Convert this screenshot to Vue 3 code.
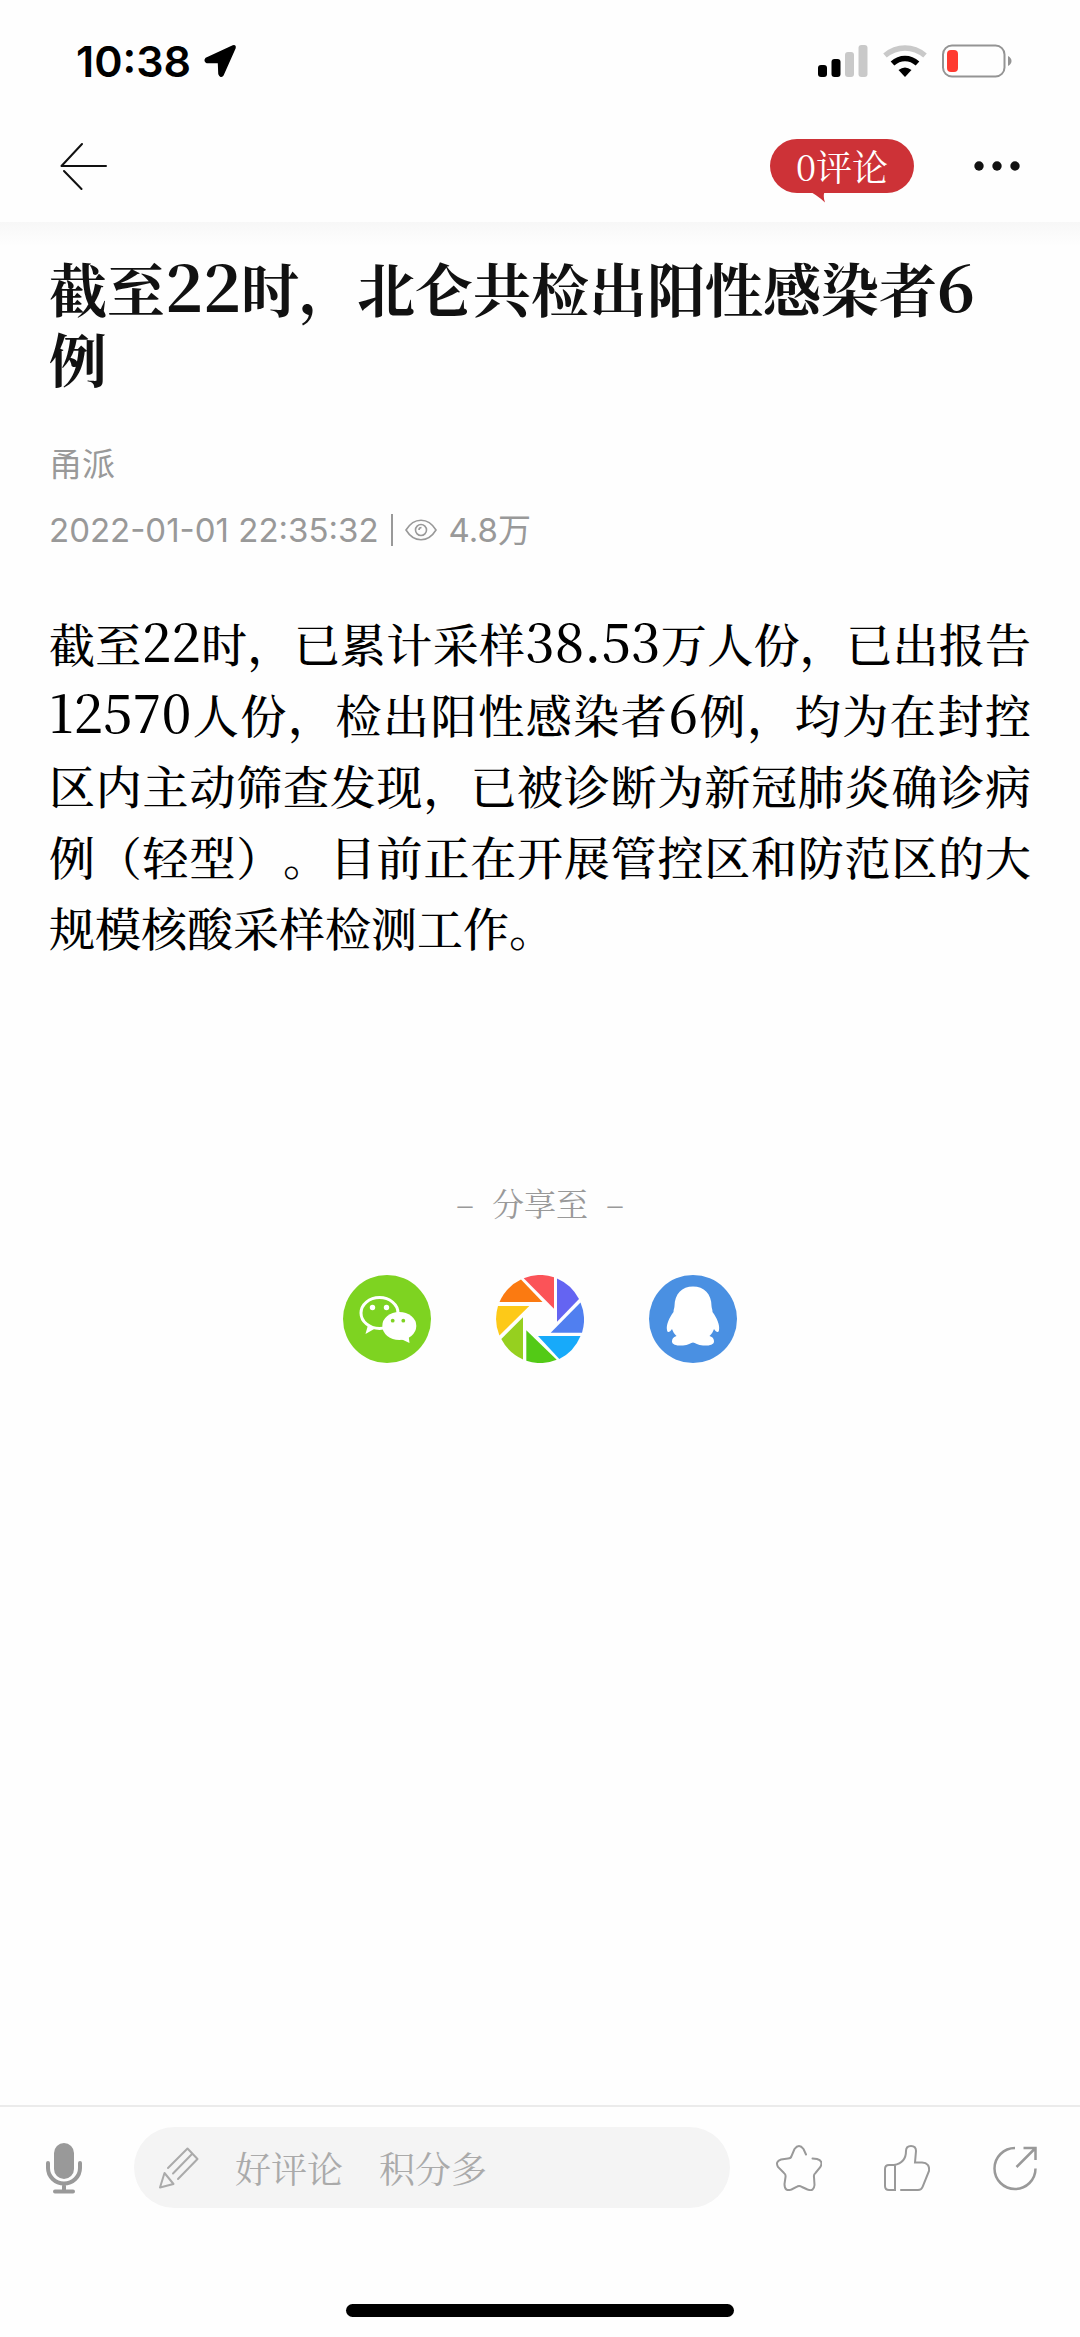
<script setup>
import { ref } from 'vue'

const commentCount = ref(0)
const comment = ref('')

const article = {
    title: '截至22时，北仑共检出阳性感染者6例',
    source: '甬派',
    publishedAt: '2022-01-01 22:35:32',
    views: '4.8万',
    body: '截至22时，已累计采样38.53万人份，已出报告12570人份，检出阳性感染者6例，均为在封控区内主动筛查发现，已被诊断为新冠肺炎确诊病例（轻型）。目前正在开展管控区和防范区的大规模核酸采样检测工作。'
}

// digits are set a little larger than the hanzi around them
function splitDigits(text) {
    return text.split(/([\d.]+)/).filter(Boolean).map(part => ({
        text: part,
        isNumber: /^\d/.test(part)
    }))
}

const titleParts = splitDigits(article.title)
const bodyParts = splitDigits(article.body)
</script>

<template>
    <div class="page">
        <header class="top">
            <div class="status-bar">
                <div class="status-left">
                    <span class="clock">10:38</span>
                    <svg class="location" width="34" height="34" viewBox="0 0 34 34">
                        <path d="M30 2 3 14.500 Q1 17 4 18.500 L15.500 18.500 16 30 Q17.500 34 20 31 L32 4 Q32.500 1 30 2Z" fill="#000" stroke="#000" stroke-width="1.500" stroke-linejoin="round" />
                    </svg>
                </div>
                <div class="status-right">
                    <svg width="50" height="32" viewBox="0 0 50 32">
                        <rect x="0" y="20" width="9" height="12" rx="3" fill="#000" />
                        <rect x="13.500" y="14" width="9" height="18" rx="3" fill="#000" />
                        <rect x="27" y="7" width="9" height="25" rx="3" fill="#c9c9c9" />
                        <rect x="40.500" y="0" width="9" height="32" rx="3" fill="#c9c9c9" />
                    </svg>
                    <svg width="44" height="32" viewBox="0 0 44 32">
                        <path d="M2 10.500 C14 0.500 30 0.500 42 10.500" fill="none" stroke="#c9c9c9" stroke-width="5.500" />
                        <path d="M9.500 18.500 C17 11.800 27 11.800 34.500 18.500" fill="none" stroke="#000" stroke-width="5.500" />
                        <path d="M15.500 25 Q22 20 28.500 25 L22 32Z" fill="#000" />
                    </svg>
                    <svg width="70" height="34" viewBox="0 0 70 34">
                        <rect x="1" y="1.500" width="61.500" height="31" rx="9" fill="none" stroke="#949494" stroke-width="2" />
                        <rect x="5" y="6" width="11" height="22" rx="4" fill="#ff3a30" />
                        <path d="M66 12 Q69.500 14 69.500 17 T66 22Z" fill="#949494" />
                    </svg>
                </div>
            </div>
            <nav class="nav-bar">
                <button class="icon-btn" type="button" aria-label="返回">
                    <svg width="48" height="48" viewBox="0 0 48 48" fill="none" stroke="#111" stroke-width="2" stroke-linecap="round" stroke-linejoin="round">
                        <path d="M22 2 1.500 24 H46 M4 29 21.500 47" />
                    </svg>
                </button>
                <div class="nav-right">
                    <button class="comment-badge" type="button">
                        {{ commentCount }}评论
                        <svg class="badge-tail" width="18" height="12" viewBox="0 0 18 12">
                            <path d="M0 0 Q8 3 17 11.500 Q14.500 5 17 0Z" fill="#cd3237" />
                        </svg>
                    </button>
                    <button class="icon-btn" type="button" aria-label="更多">
                        <svg width="46" height="10" viewBox="0 0 46 10" fill="#111">
                            <circle cx="5" cy="5" r="4.700" />
                            <circle cx="23" cy="5" r="4.700" />
                            <circle cx="41" cy="5" r="4.700" />
                        </svg>
                    </button>
                </div>
            </nav>
        </header>

        <main class="content">
            <h1 class="title"><span v-for="(part, i) in titleParts" :key="i" :class="{ number: part.isNumber }">{{ part.text }}</span></h1>
            <div class="source">{{ article.source }}</div>
            <div class="meta">
                <time>{{ article.publishedAt }}</time>
                <span class="divider"></span>
                <svg width="32" height="22" viewBox="0 0 32 22" fill="none" stroke="#999" stroke-width="1.600">
                    <path d="M1 11 C9 -2 23 -2 31 11 C23 24 9 24 1 11Z" />
                    <circle cx="16" cy="11" r="5.500" />
                    <path d="M14 11 a2.500 2.500 0 0 1 2.500 -2.500" />
                </svg>
                <span>{{ article.views }}</span>
            </div>
            <p class="body"><span v-for="(part, i) in bodyParts" :key="i" :class="{ number: part.isNumber }">{{ part.text }}</span></p>

            <section class="share">
                <h2 class="share-title"><span>–</span><span>分享至</span><span>–</span></h2>
                <div class="share-list">
                    <button class="icon-btn" type="button" aria-label="微信">
                        <svg width="88" height="88" viewBox="0 0 88 88">
                            <circle cx="44" cy="44" r="44" fill="#7ed321" />
                            <ellipse cx="36.500" cy="38" rx="18.500" ry="15.500" fill="none" stroke="#fff" stroke-width="3" />
                            <path d="M25 50 22.500 59 32 53.500Z" fill="#fff" />
                            <circle cx="29.500" cy="32.500" r="2.700" fill="#fff" />
                            <circle cx="43.500" cy="32.500" r="2.700" fill="#fff" />
                            <ellipse cx="56.300" cy="51" rx="17" ry="14" fill="#fff" />
                            <path d="M58 64 66.500 68 65.500 60Z" fill="#fff" />
                            <circle cx="49.700" cy="45.700" r="1.900" fill="#7ed321" />
                            <circle cx="60.300" cy="45.700" r="1.900" fill="#7ed321" />
                        </svg>
                    </button>
                    <button class="icon-btn" type="button" aria-label="朋友圈">
                        <svg width="88" height="88" viewBox="0 0 88 88">
                            <path d="M27.700 3.300 A44 44 0 0 1 58 2.200 V33.700Z" fill="#fb5358" />
                            <path d="M61 3.400 A44 44 0 0 1 83 24 L61 46.700Z" fill="#6464f2" />
                            <path d="M84.500 27.500 A44 44 0 0 1 86 57.700 H54.700Z" fill="#507ff0" />
                            <path d="M84.500 61 A44 44 0 0 1 63.300 84 L42 61Z" fill="#17aafa" />
                            <path d="M60.700 84.700 A44 44 0 0 1 30.300 85.800 V55.300Z" fill="#53ca16" />
                            <path d="M27 84.500 A44 44 0 0 1 5.300 64 L27 42.300Z" fill="#96d01f" />
                            <path d="M3.400 60.500 A44 44 0 0 1 2 31 H33.300Z" fill="#fdc918" />
                            <path d="M3.500 27 A44 44 0 0 1 25 4.600 L46.500 27Z" fill="#fb7a11" />
                        </svg>
                    </button>
                    <button class="icon-btn" type="button" aria-label="QQ">
                        <svg width="88" height="88" viewBox="0 0 88 88">
                            <circle cx="44" cy="44" r="44" fill="#4a90e2" />
                            <path d="M44 11.500 C33 11.500 25.500 19 25.500 31 C25.500 33 24.500 34 24.500 37 C20 43 17 50 18 55 C18.500 58.500 21 57 23 54 C24 57 25.500 59 27.500 61 C24 62 23 64 23 66.500 C23 70 29 71 34 70.500 C39 70 42 68 44 67.500 C46 68 49 70 54 70.500 C59 71 65 70 65 66.500 C65 64 64 62 60.500 61 C62.500 59 64 57 65 54 C67 57 69.500 58.500 70 55 C71 50 68 43 63.500 37 C63.500 34 62.500 33 62.500 31 C62.500 19 55 11.500 44 11.500Z" fill="#fff" />
                        </svg>
                    </button>
                </div>
            </section>
        </main>

        <footer class="bottom">
            <div class="toolbar">
                <button class="icon-btn" type="button" aria-label="语音">
                    <svg width="36" height="52" viewBox="0 0 36 52" fill="none" stroke="#999" stroke-linecap="round">
                        <rect x="8" y="1" width="20" height="36" rx="10" fill="#999" stroke="none" />
                        <path d="M2 21 V26 A16 15.500 0 0 0 34 26 V21 M18 42 V49 M9 49.500 H27" stroke-width="4" />
                    </svg>
                </button>
                <label class="comment-box">
                    <svg width="42" height="42" viewBox="0 0 42 42" fill="none" stroke="#aaa" stroke-width="2" stroke-linecap="round" stroke-linejoin="round">
                        <path d="M10 21 29.500 1.500 39.500 12 20 32 M15 26.500 34 7 M6.500 26 15.500 37 2 40.500Z" />
                    </svg>
                    <input v-model="comment" type="text" placeholder="好评论　积分多" aria-label="评论">
                </label>
                <div class="actions">
                    <button class="icon-btn" type="button" aria-label="收藏">
                        <svg width="46" height="46" viewBox="0 0 46 46" fill="none" stroke="#999" stroke-width="2" stroke-linecap="round">
                            <path d="M30 9.500 L27.500 4 Q23 -2 18.500 4 L15.500 11 Q15 13.500 12 13.500 L5 14.500 Q-1 16.500 2 22 L8 28 Q10 29.500 9.500 32 L8.500 39 Q8.500 47 15.500 44.500 L20.500 42 Q23 40 26 42 L31.500 44.500 Q38 47 38.500 40 L38 32 Q37.500 29.500 39.500 28 L44 22.500 Q48 16 41 14 L36.500 13.500" />
                        </svg>
                    </button>
                    <button class="icon-btn" type="button" aria-label="点赞">
                        <svg width="46" height="46" viewBox="0 0 46 46" fill="none" stroke="#999" stroke-width="2" stroke-linecap="round">
                            <path d="M11 20 V45 H5 Q1 45 1 41 V24 Q1 20 5 20 H10 Q22 18 22 6 Q22 1 27 1 T32 6 L31 17.500 H38 Q46 18 45 26 L38.500 42 Q37.500 45 34 45 H17" />
                        </svg>
                    </button>
                    <button class="icon-btn" type="button" aria-label="分享">
                        <svg width="46" height="46" viewBox="0 0 46 46" fill="none" stroke="#999" stroke-width="2.500">
                            <path d="M23 3 A20.500 20.500 0 1 0 43.500 23.500 M31.500 3 H43.500 V15 M43 3.500 24.500 22" />
                        </svg>
                    </button>
                </div>
            </div>
            <div class="home-indicator"></div>
        </footer>
    </div>
</template>

<style>
body {
    margin: 0;
    background: #fefefe;
}
</style>

<style scoped>
.page {
    display: flex;
    flex-direction: column;
    min-height: 100vh;
    color: #000;
    font-family: "Noto Serif CJK SC", "Noto Sans CJK SC", serif;
}

.icon-btn {
    display: flex;
    padding: 0;
    border: none;
    background: none;
}

.top {
    padding-bottom: 24px;
    background: linear-gradient(#f7f7f7, #fefefe) bottom / 100% 24px no-repeat;
}

.status-bar {
    display: flex;
    justify-content: space-between;
    align-items: center;
    height: 48px;
    padding: 37px 68px 0 76px;
}

.status-left,
.status-right {
    display: flex;
    align-items: center;
    gap: 15px;
}

.status-left {
    gap: 12px;
}

.clock {
    font-family: Inter, sans-serif;
    font-size: 43px;
    font-weight: 600;
    line-height: 48px;
}

.nav-bar {
    display: flex;
    justify-content: space-between;
    align-items: center;
    height: 137px;
    padding: 25px 60px 0;
    box-sizing: border-box;
}

.nav-right {
    display: flex;
    align-items: center;
    gap: 60px;
}

.comment-badge {
    position: relative;
    min-width: 144px;
    height: 54px;
    padding: 0;
    border: none;
    border-radius: 27px;
    background: #cd3237;
    color: #fff;
    font-family: inherit;
    font-size: 36px;
    line-height: 54px;
}

.badge-tail {
    position: absolute;
    top: 52px;
    left: 38px;
}

.content {
    flex: 1;
    padding: 6px 49px 0;
}

.title {
    margin: 0;
    padding-right: 24px;
    color: #111;
    font-size: 58px;
    font-weight: 700;
    line-height: 70px;
}

.title .number {
    font-size: 64px;
    line-height: 1;
}

.source,
.meta {
    color: #999;
    font-family: Inter, "Noto Sans CJK SC", sans-serif;
    font-size: 33px;
    font-weight: 400;
    line-height: 40px;
}

.source {
    margin-top: 52px;
}

.meta {
    display: flex;
    align-items: center;
    gap: 12px;
    margin-top: 26px;
}

.divider {
    width: 2px;
    height: 32px;
    background: #999;
}

.body {
    margin: 57px 0 0;
    font-size: 46px;
    font-weight: 500;
    line-height: 71px;
    text-align: justify;
    text-spacing-trim: space-all;
}

.body .number {
    font-size: 52px;
    line-height: 1;
}

.share {
    margin-top: 216px;
}

.share-title {
    display: flex;
    justify-content: center;
    gap: 18px;
    margin: 0;
    color: #999;
    font-size: 32px;
    font-weight: 400;
    line-height: 48px;
}

.share-list {
    display: flex;
    justify-content: center;
    gap: 65px;
    margin-top: 49px;
}

.bottom {
    border-top: 2px solid #ebebeb;
}

.toolbar {
    display: flex;
    align-items: center;
    padding: 20px 42px 0 46px;
}

.comment-box {
    display: flex;
    flex: 1;
    align-items: center;
    gap: 35px;
    height: 81px;
    margin-left: 52px;
    padding: 0 24px;
    border-radius: 41px;
    background: #f4f4f4;
}

.comment-box input {
    flex: 1;
    min-width: 0;
    padding: 0;
    border: none;
    outline: none;
    background: none;
    font-family: inherit;
    font-size: 36px;
}

.comment-box input::placeholder {
    color: #aaa;
    opacity: 1;
}

.actions {
    display: flex;
    gap: 62px;
    margin-left: 46px;
}

.home-indicator {
    width: 36%;
    height: 13px;
    margin: 96px auto 20px;
    border-radius: 7px;
    background: #000;
}
</style>
